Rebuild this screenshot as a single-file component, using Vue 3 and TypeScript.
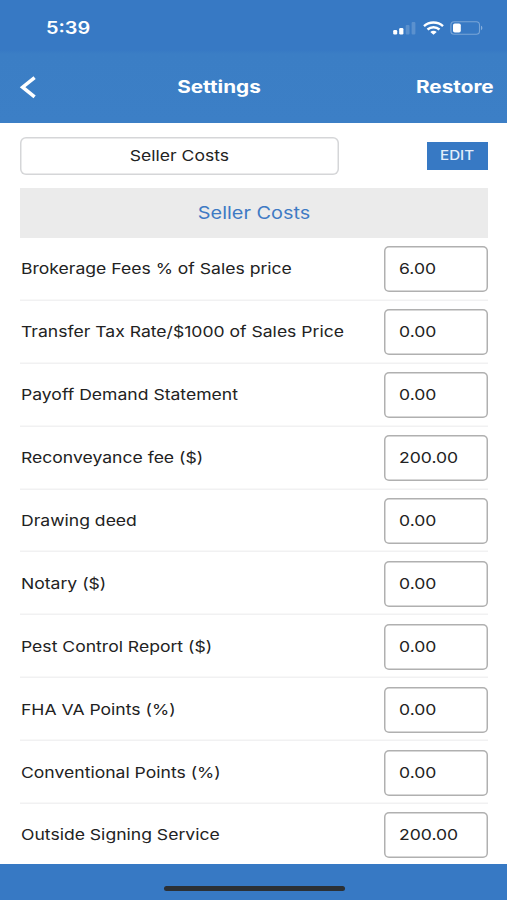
<script setup lang="ts">
import { ref } from 'vue'

interface CostItem {
  label: string
  value: string
}

const items = ref<CostItem[]>([
  { label: 'Brokerage Fees % of Sales price', value: '6.00' },
  { label: 'Transfer Tax Rate/$1000 of Sales Price', value: '0.00' },
  { label: 'Payoff Demand Statement', value: '0.00' },
  { label: 'Reconveyance fee ($)', value: '200.00' },
  { label: 'Drawing deed', value: '0.00' },
  { label: 'Notary ($)', value: '0.00' },
  { label: 'Pest Control Report ($)', value: '0.00' },
  { label: 'FHA VA Points (%)', value: '0.00' },
  { label: 'Conventional Points (%)', value: '0.00' },
  { label: 'Outside Signing Service', value: '200.00' },
])
</script>

<template>
  <div class="screen">
    <header class="header">
      <div class="status">
        <span class="time wide">5:39</span>
        <div class="indicators">
          <svg class="signal" width="24" height="14" viewBox="0 0 24 14">
            <rect x="0.2" y="9" width="4" height="4.4" rx="1.2" fill="#fff" />
            <rect x="6.2" y="7" width="4.2" height="6.4" rx="1.2" fill="#fff" />
            <rect x="12.7" y="4" width="3.8" height="9.4" rx="1" fill="#fff" opacity="0.18" />
            <rect x="18.6" y="1" width="3.8" height="12.4" rx="1" fill="#fff" opacity="0.18" />
          </svg>
          <svg class="wifi" width="21" height="14" viewBox="0 0 21 14">
            <g fill="none" stroke="#fff" stroke-width="2.4">
              <path d="M1 5.1C6.2 0.3 14.8 0.3 20 5.1" />
              <path d="M4.5 8.5C8 5.4 13 5.4 16.5 8.5" />
            </g>
            <path d="M7.3 10.9C9.1 9.3 11.9 9.3 13.7 10.9L10.5 13.7Z" fill="#fff" />
          </svg>
          <svg class="battery" width="34" height="14" viewBox="0 0 34 14">
            <rect x="0.9" y="0.7" width="28.6" height="12.6" rx="3.3" fill="none" stroke="#fff" stroke-opacity="0.33" stroke-width="1.1" />
            <rect x="3" y="2.5" width="7.8" height="9" rx="1.8" fill="#fff" />
            <path d="M31 4.8C32.8 5.4 32.8 8.6 31 9.2Z" fill="#fff" opacity="0.4" />
          </svg>
        </div>
      </div>
      <nav class="nav">
        <button class="back" aria-label="Back">
          <svg width="18" height="24" viewBox="0 0 18 24">
            <path d="M15.6 2.6L3.6 12.2L15.6 21.8" fill="none" stroke="#fff" stroke-width="3.5" />
          </svg>
        </button>
        <span class="title wide">Settings</span>
        <button class="restore"><span class="wide">Restore</span></button>
      </nav>
    </header>

    <section class="toolbar">
      <button class="select"><span class="wide">Seller Costs</span></button>
      <button class="edit"><span class="wide">EDIT</span></button>
    </section>

    <main class="content">
      <h2 class="heading"><span class="wide">Seller Costs</span></h2>
      <div class="list">
        <div v-for="item in items" :key="item.label" class="row">
          <span class="label wide">{{ item.label }}</span>
          <div class="field"><span class="wide">{{ item.value }}</span></div>
        </div>
      </div>
    </main>

    <footer class="footer"><div class="home"></div></footer>
  </div>
</template>

<style>
body {
  margin: 0;
}
</style>

<style scoped>
.screen {
  display: flex;
  flex-direction: column;
  width: 507px;
  height: 900px;
  overflow: hidden;
  background: #fff;
  color: #222;
  font-family: Inter, "Liberation Sans", sans-serif;
  box-sizing: border-box;
}
.screen * {
  box-sizing: border-box;
}
button {
  margin: 0;
  padding: 0;
  border: 0;
  background: none;
  color: inherit;
  font: inherit;
}
.wide {
  display: inline-block;
  white-space: nowrap;
  transform: scaleX(1.17);
}
.header {
  flex: none;
  height: 123px;
  color: #fff;
  background: linear-gradient(#3779c4 0, #3779c4 50px, #3b7ec5 54px, #3c7fc6 100%);
}
.status {
  display: flex;
  align-items: center;
  justify-content: space-between;
  height: 54px;
  padding: 1px 23px 0 46px;
}
.time {
  font-size: 17px;
  font-weight: 600;
  transform-origin: left;
}
.indicators {
  display: flex;
  align-items: center;
  gap: 6px;
}
.nav {
  display: grid;
  grid-template-columns: 118px 164px 1fr;
  align-items: center;
  height: 66px;
  padding: 0 13px 0 19px;
  font-size: 17px;
  font-weight: 700;
}
.title {
  text-align: center;
}
.nav .wide {
  transform: scaleX(1.22);
}
.back {
  display: flex;
}
.restore {
  justify-self: end;
}
.nav .restore .wide {
  transform-origin: right;
}
.toolbar {
  flex: none;
  display: flex;
  align-items: center;
  justify-content: space-between;
  height: 65px;
  padding: 0 19px 0 20px;
}
.select {
  width: 319px;
  height: 38px;
  border-radius: 6px;
  box-shadow: inset 0 0 0 1.5px #d5d6d8;
  font-size: 15px;
}
.edit {
  width: 61px;
  height: 28px;
  background: #3779c4;
  color: #e3eefa;
  font-size: 12.5px;
  font-weight: 500;
}
.edit .wide {
  transform: scaleX(1.21);
}
.content {
  flex: 1;
  min-height: 0;
  padding: 0 19px 0 20px;
  overflow: hidden;
}
.heading {
  display: flex;
  align-items: center;
  justify-content: center;
  height: 50px;
  margin: 0;
  background: #ebebeb;
  color: #3e7ac4;
  font-size: 17px;
  font-weight: 400;
}
.row {
  display: flex;
  align-items: center;
  justify-content: space-between;
  height: 62.9px;
  box-shadow: inset 0 -1.5px 0 #f1f1f2;
}
.label {
  margin-left: 0.5px;
  transform: scaleX(1.171);
  transform-origin: left;
  font-size: 15px;
}
.row .wide {
  margin-bottom: 1px;
}
.field {
  display: flex;
  align-items: center;
  width: 104px;
  height: 46px;
  padding-left: 15px;
  border-radius: 5px;
  box-shadow: inset 0 0 0 1.5px #b0b0b0;
  font-size: 15px;
}
.field .wide {
  transform-origin: left;
}
.footer {
  flex: none;
  display: flex;
  justify-content: center;
  height: 36px;
  padding: 22px 0 0 1px;
  background: #3779c4;
}
.home {
  width: 181px;
  height: 5px;
  border-radius: 3px;
  background: #2b3035;
}
</style>
